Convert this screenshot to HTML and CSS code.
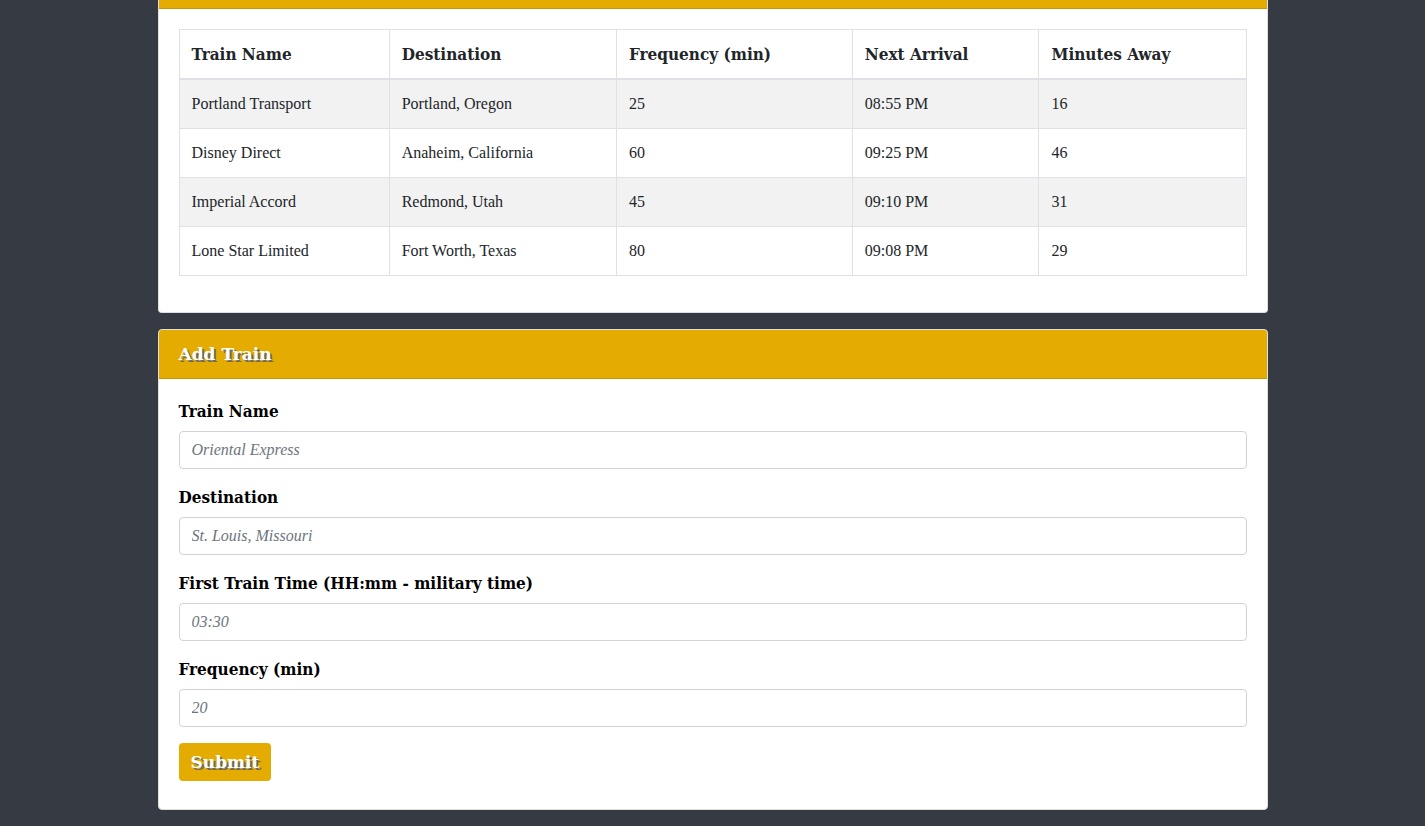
FILE: index.html
```html
<!DOCTYPE html>
<html lang="en">
<head>
<meta charset="utf-8">
<meta name="viewport" content="width=device-width, initial-scale=1">
<title>Train Scheduler</title>
<link rel="stylesheet" href="styles.css">
</head>
<body>
<main class="container">
  <section class="card card-continued">
    <div class="card-strip"></div>
    <div class="card-body">
      <table class="table">
        <thead>
          <tr>
            <th class="col-name" scope="col">Train Name</th>
            <th class="col-destination" scope="col">Destination</th>
            <th class="col-frequency" scope="col">Frequency (min)</th>
            <th class="col-arrival" scope="col">Next Arrival</th>
            <th scope="col">Minutes Away</th>
          </tr>
        </thead>
        <tbody>
          <tr><td>Portland Transport</td><td>Portland, Oregon</td><td>25</td><td>08:55 PM</td><td>16</td></tr>
          <tr><td>Disney Direct</td><td>Anaheim, California</td><td>60</td><td>09:25 PM</td><td>46</td></tr>
          <tr><td>Imperial Accord</td><td>Redmond, Utah</td><td>45</td><td>09:10 PM</td><td>31</td></tr>
          <tr><td>Lone Star Limited</td><td>Fort Worth, Texas</td><td>80</td><td>09:08 PM</td><td>29</td></tr>
        </tbody>
      </table>
    </div>
  </section>

  <section class="card">
    <h2 class="card-header">Add Train</h2>
    <form class="card-body">
      <div class="form-group">
        <label for="train-name">Train Name</label>
        <input class="form-control" id="train-name" type="text" placeholder="Oriental Express">
      </div>
      <div class="form-group">
        <label for="destination">Destination</label>
        <input class="form-control" id="destination" type="text" placeholder="St. Louis, Missouri">
      </div>
      <div class="form-group">
        <label for="first-time">First Train Time (HH:mm - military time)</label>
        <input class="form-control" id="first-time" type="text" placeholder="03:30">
      </div>
      <div class="form-group">
        <label for="frequency">Frequency (min)</label>
        <input class="form-control" id="frequency" type="text" placeholder="20">
      </div>
      <button class="btn" type="submit">Submit</button>
    </form>
  </section>
</main>
</body>
</html>
```
FILE: styles.css
```css
*,
*::before,
*::after {
  box-sizing: border-box;
}

body {
  margin: 0;
  background: #363a42;
  color: #212529;
  font-family: "Liberation Serif", "Times New Roman", serif;
  font-size: 16px;
  line-height: 24px;
}

.container {
  max-width: 1140px;
  margin: 0 auto;
  padding: 0 15px;
}

.card {
  margin-bottom: 16px;
  background: #fff;
  background-clip: border-box;
  border: 1px solid #dfdfdf;
  border-radius: 4px;
}

.card-continued {
  border-top: 0;
  border-top-left-radius: 0;
  border-top-right-radius: 0;
}

.card-strip {
  height: 9px;
  background: #e4ab00;
  border-bottom: 1px solid #c79600;
}

.card-header {
  margin: 0;
  padding: 12px 20px;
  background: #e4ab00;
  border-bottom: 1px solid #c79600;
  border-radius: 3px 3px 0 0;
  color: #fff;
  font-family: "DejaVu Serif", serif;
  font-size: 17px;
  font-weight: 700;
  line-height: 24px;
  text-shadow: 2px 2px #6c6c6c;
}

.card-body {
  padding: 20px;
}

.table {
  width: 100%;
  margin-bottom: 16px;
  border-collapse: collapse;
  table-layout: fixed;
}

.table th,
.table td {
  padding: 12px;
  border: 1px solid #dee2e6;
  text-align: left;
}

.table th {
  border-bottom-width: 2px;
  font-family: "DejaVu Serif Condensed", "DejaVu Serif", serif;
  font-size: 17px;
  font-weight: 700;
}

.table tbody tr:nth-child(odd) {
  background: #f2f2f2;
}

.col-name {
  width: 19.7%;
}

.col-destination {
  width: 21.3%;
}

.col-frequency {
  width: 22.1%;
}

.col-arrival {
  width: 17.5%;
}

.form-group {
  margin-bottom: 16px;
}

.form-group label {
  display: block;
  margin-bottom: 8px;
  color: #000;
  font-family: "DejaVu Serif Condensed", "DejaVu Serif", serif;
  font-size: 17px;
  font-weight: 700;
}

.form-control {
  display: block;
  width: 100%;
  height: 38px;
  padding: 6px 12px;
  background: #fff;
  border: 1px solid #ced4da;
  border-radius: 4px;
  color: #495057;
  font-family: inherit;
  font-size: 16px;
  line-height: 24px;
}

.form-control::placeholder {
  color: #6c757d;
  font-style: italic;
  opacity: 1;
}

.btn {
  display: block;
  margin-bottom: 8px;
  padding: 7px 12px;
  background: #e4ab00;
  border: 0;
  border-radius: 4px;
  color: #fff;
  font-family: "DejaVu Serif", serif;
  font-size: 17px;
  font-weight: 700;
  line-height: 24px;
  text-shadow: 2px 2px #6c6c6c;
}
```
